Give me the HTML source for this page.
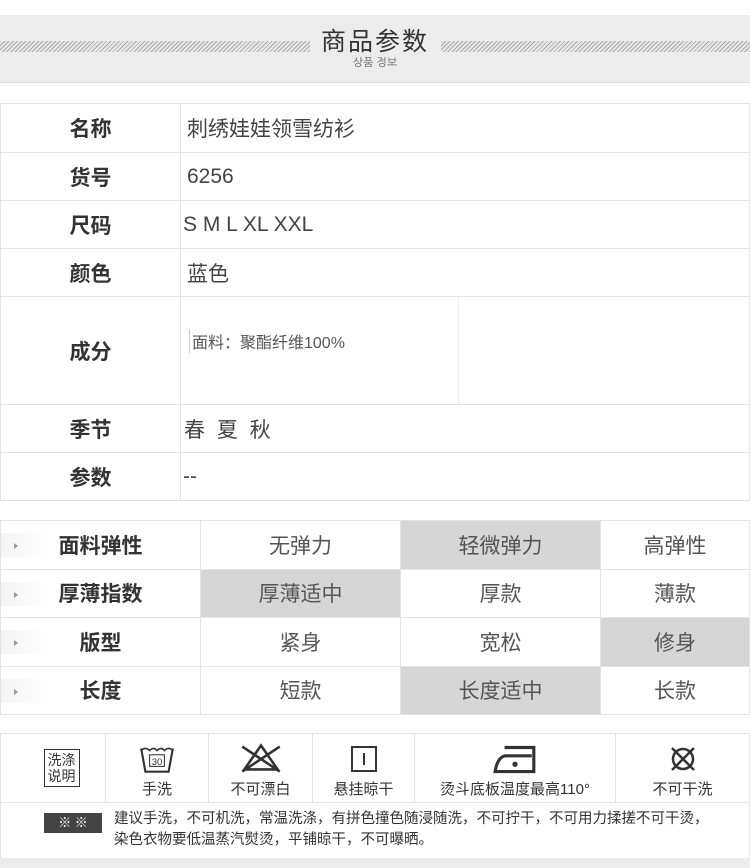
<!DOCTYPE html>
<html><head><meta charset="utf-8"><style>
*{margin:0;padding:0;box-sizing:border-box}
body{width:750px;height:868px;background:#fff;font-family:"Liberation Sans","Noto Sans CJK SC",sans-serif;color:#333;position:relative;overflow:hidden}
.abs{position:absolute}
.band{left:0;top:15px;width:750px;height:68px;background:#ececec;border-bottom:1px solid #ddd}
.hatch{top:41px;height:11px;background:repeating-linear-gradient(135deg,#aaa 0 1px,#e8e8e8 1px 3px)}
table{border-collapse:collapse;position:absolute;left:0;width:750px}
td{border:1px solid #e3e3e3}
.t1 td.l{width:180px;text-align:center;font-weight:bold;font-size:21px;color:#333}
.t1 td.v{padding-left:6px;font-size:21px;color:#444}
.t2 td{text-align:center;font-size:21px;color:#555;height:48.5px}
.t2 td.l{font-weight:bold;color:#333;position:relative}
.t2 td.l:before{content:"";position:absolute;left:0;top:12px;width:50px;height:24px;background:linear-gradient(90deg,#f4f4f4,#fff)}
.t2 td.l span{position:relative}
.t2 td.l i{position:absolute;left:13px;top:22px;border-left:4px solid #999;border-top:3px solid transparent;border-bottom:3px solid transparent}
.g{background:#d6d6d6}
.t3 td{text-align:center;font-size:15px;color:#333;vertical-align:bottom;padding-bottom:3px}
</style></head><body>
<div class="abs band"></div>
<div class="abs hatch" style="left:0;width:310px"></div>
<div class="abs hatch" style="left:441px;width:309px"></div>
<div class="abs" style="left:0;width:750px;top:29px;line-height:26px;text-align:center;font-size:25px;color:#333;letter-spacing:2px">商品参数</div>
<div class="abs" style="left:0;width:750px;top:57px;line-height:12px;text-align:center;font-size:11px;color:#666;font-family:'NanumGothic','Noto Sans CJK KR',sans-serif">상품 정보</div>

<table class="t1" style="top:103px">
<tr style="height:49px"><td class="l">名称</td><td class="v">刺绣娃娃领雪纺衫</td></tr>
<tr style="height:48px"><td class="l">货号</td><td class="v">6256</td></tr>
<tr style="height:48px"><td class="l">尺码</td><td class="v" style="padding-left:2px">S M L XL XXL</td></tr>
<tr style="height:48px"><td class="l">颜色</td><td class="v">蓝色</td></tr>
<tr style="height:108px"><td class="l">成分</td><td class="v" style="vertical-align:top;position:relative"><div style="position:absolute;left:8px;top:32px;font-size:16px;color:#555;border-left:1px solid #ccc;padding-left:2px">面料：聚酯纤维100%</div><div style="position:absolute;left:277px;top:0;height:108px;border-left:1px solid #eee"></div></td></tr>
<tr style="height:48px"><td class="l">季节</td><td class="v" style="padding-left:3px;letter-spacing:3px">春 夏 秋</td></tr>
<tr style="height:48px"><td class="l">参数</td><td class="v" style="padding-left:2px">--</td></tr>
</table>

<table class="t2" style="top:520px">
<tr><td class="l" style="width:200px"><i></i><span>面料弹性</span></td><td style="width:200px">无弹力</td><td class="g" style="width:200px">轻微弹力</td><td>高弹性</td></tr>
<tr><td class="l"><i></i><span>厚薄指数</span></td><td class="g">厚薄适中</td><td>厚款</td><td>薄款</td></tr>
<tr><td class="l"><i></i><span>版型</span></td><td>紧身</td><td>宽松</td><td class="g">修身</td></tr>
<tr><td class="l"><i></i><span>长度</span></td><td>短款</td><td class="g">长度适中</td><td>长款</td></tr>
</table>

<table class="t3" style="top:733px">
<tr style="height:69px">
<td style="width:105px;vertical-align:middle;padding:0"><div style="display:inline-block;border:1px solid #333;font-size:14px;line-height:16px;padding:2px 3px;margin-left:17px">洗涤<br>说明</div></td>
<td style="width:103px"><svg width="38" height="30" viewBox="0 0 36 28"><path d="M3 4 L7 26 H29 L33 4" fill="none" stroke="#333" stroke-width="2"/><path d="M3 6 Q7 2 11 6 Q15 2 18 6 Q22 2 25 6 Q29 2 33 6" fill="none" stroke="#333" stroke-width="1.5"/><rect x="11" y="10" width="14" height="11" fill="none" stroke="#333"/><text x="18" y="19.5" font-size="9" text-anchor="middle" fill="#333">30</text></svg><br>手洗</td>
<td style="width:104px"><svg width="50" height="32" viewBox="0 0 48 30"><path d="M24 3 L40 26 H8 Z" fill="none" stroke="#333" stroke-width="2.5"/><path d="M6 4 L42 28 M42 4 L6 28" stroke="#333" stroke-width="2.5"/></svg><br>不可漂白</td>
<td style="width:102px"><svg width="28" height="30" viewBox="0 0 28 28"><rect x="2" y="2" width="24" height="24" fill="none" stroke="#333" stroke-width="2"/><path d="M14 8 V20" stroke="#333" stroke-width="2"/></svg><br>悬挂晾干</td>
<td style="width:201px"><svg width="46" height="30" viewBox="0 0 44 28"><path d="M12 3 H40 V26 H3 Q5 13 12 11 H38" fill="none" stroke="#333" stroke-width="3"/><circle cx="22" cy="19" r="2.5" fill="#333"/></svg><br>烫斗底板温度最高110°</td>
<td><svg width="30" height="30" viewBox="0 0 30 28"><circle cx="15" cy="14" r="10" fill="none" stroke="#333" stroke-width="2.5"/><path d="M4 3 L26 25 M26 3 L4 25" stroke="#333" stroke-width="2.5"/></svg><br>不可干洗</td>
</tr>
<tr style="height:56px"><td colspan="6" style="text-align:left;vertical-align:top;padding:6px 0 0 0;position:relative;font-size:14.5px;line-height:21px">
<div style="position:absolute;left:43px;top:10px;width:58px;height:20px;background:#444;color:#fff;font-size:13px;text-align:center;line-height:20px">※ ※</div>
<div style="margin-left:113px">建议手洗，不可机洗，常温洗涤，有拼色撞色随浸随洗，不可拧干，不可用力揉搓不可干烫，<br>染色衣物要低温蒸汽熨烫，平铺晾干，不可曝晒。</div></td></tr>
</table>
<div class="abs" style="left:0;top:858px;width:750px;height:10px;background:#ececec"></div>
</body></html>
